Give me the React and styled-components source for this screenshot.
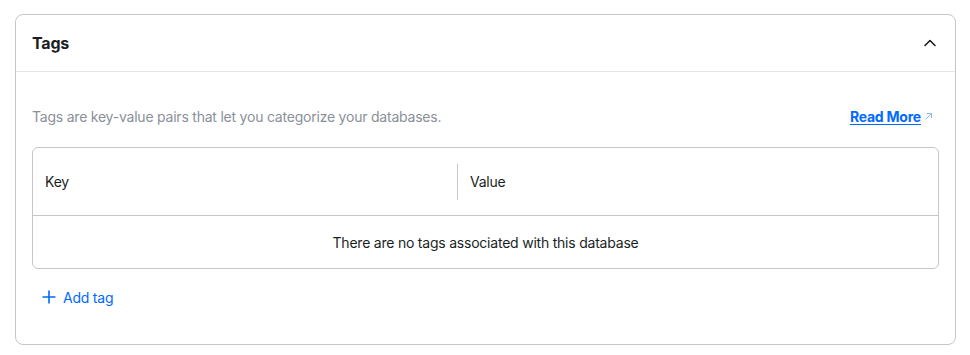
import React from 'react';
import styled, { createGlobalStyle } from 'styled-components';

const GlobalStyle = createGlobalStyle`
  body {
    margin: 0;
    background: #fff;
    font-family: Inter, "Noto Sans", sans-serif;
    color: #1b1f24;
  }
`;

function ChevronUp() {
  return (
    <svg width="14" height="14" viewBox="0 0 14 14" fill="none">
      <path d="M2 9.5L7 4.5L12 9.5" stroke="#1b1f24" strokeWidth="1.6" strokeLinecap="round" strokeLinejoin="round" />
    </svg>
  );
}

function ArrowUpRight() {
  return (
    <svg width="9" height="9" viewBox="0 0 9 9" fill="none">
      <path d="M1.5 7.5L7.5 1.5M3 1.5H7.5V6" stroke="#8fb8ef" strokeWidth="1" />
    </svg>
  );
}

function Plus() {
  return (
    <svg width="14" height="14" viewBox="0 0 14 14" fill="none">
      <path d="M7 0.5V13.5M0.5 7H13.5" stroke="#0069ff" strokeWidth="1.6" />
    </svg>
  );
}

function TagsPanel() {
  return (
    <Card>
      <Header>
        <Title>Tags</Title>
        <Toggle aria-label="Collapse"><ChevronUp /></Toggle>
      </Header>
      <Body>
        <InfoRow>
          <Description>Tags are key-value pairs that let you categorize your databases.</Description>
          <ReadMore href="#">Read More<ArrowUpRight /></ReadMore>
        </InfoRow>
        <Table>
          <HeadRow>
            <HeadCell>Key</HeadCell>
            <HeadCell divided>Value</HeadCell>
          </HeadRow>
          <EmptyRow>There are no tags associated with this database</EmptyRow>
        </Table>
        <AddButton><Plus />Add tag</AddButton>
      </Body>
    </Card>
  );
}

export default function App() {
  return (
    <Page>
      <GlobalStyle />
      <TagsPanel />
    </Page>
  );
}

const Page = styled.div`
  padding: 14px 0 0 15px;
`;

const Card = styled.section`
  box-sizing: border-box;
  width: 941px;
  height: 331px;
  border: 1px solid #c6c6c6;
  border-radius: 8px;
  background: #fff;
`;

const Header = styled.header`
  display: flex;
  align-items: center;
  justify-content: space-between;
  height: 56px;
  padding: 0 16px;
  border-bottom: 1px solid #e4e4e4;
`;

const Title = styled.h2`
  margin: 0;
  font-size: 16px;
  font-weight: 700;
  letter-spacing: -0.2px;
  color: #1b1f24;
`;

const Toggle = styled.button`
  display: flex;
  border: 0;
  background: none;
  padding: 0;
  margin-right: 2px;
  cursor: pointer;
`;

const Body = styled.div`
  padding: 32px 16px 0;
  font-size: 14px;
  letter-spacing: -0.22px;
`;

const InfoRow = styled.div`
  display: flex;
  align-items: center;
  justify-content: space-between;
  height: 24px;
`;

const Description = styled.p`
  margin: 0;
  color: #8a9099;
`;

const ReadMore = styled.a`
  display: inline-flex;
  align-items: center;
  gap: 3px;
  margin-right: 6px;
  font-weight: 700;
  color: #0069ff;
  text-decoration: underline;
  text-underline-offset: 2px;
`;

const Table = styled.div`
  margin-top: 19px;
  border: 1px solid #c6c6c6;
  border-radius: 6px;
`;

const HeadRow = styled.div`
  display: grid;
  grid-template-columns: 424px 1fr;
  align-items: center;
  height: 67px;
  border-bottom: 1px solid #c6c6c6;
`;

const HeadCell = styled.div`
  padding-left: 12px;
  line-height: 36px;
  border-left: ${p => (p.divided ? '1px solid #c6c6c6' : 'none')};
`;

const EmptyRow = styled.div`
  display: flex;
  align-items: center;
  justify-content: center;
  height: 52px;
  color: #1b1f24;
`;

const AddButton = styled.button`
  display: flex;
  align-items: center;
  gap: 7px;
  margin-top: 20px;
  padding: 0 0 0 10px;
  border: 0;
  background: none;
  font-family: inherit;
  font-size: 14px;
  letter-spacing: inherit;
  color: #0069ff;
  height: 16px;
  cursor: pointer;
`;
